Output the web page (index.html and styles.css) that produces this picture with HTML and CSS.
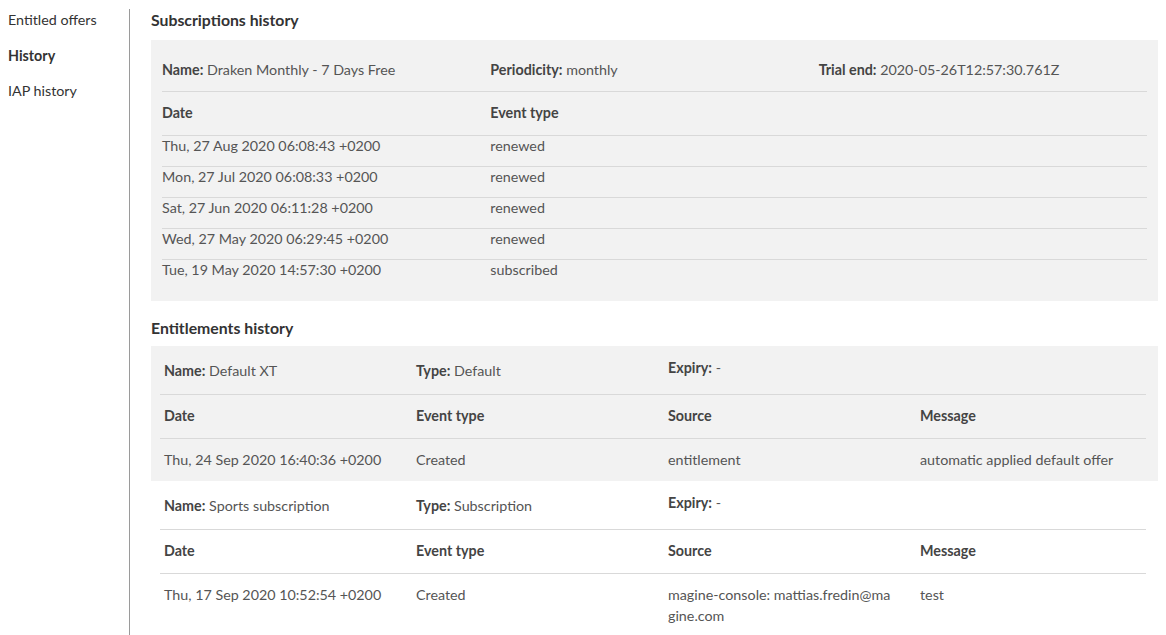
FILE: index.html
```html
<!DOCTYPE html>
<html lang="en">
<head>
    <meta charset="UTF-8">
    <meta name="viewport" content="width=device-width, initial-scale=1.0">
    <title>History</title>
    <link rel="stylesheet" href="styles.css">
</head>
<body>

    <div class="layout">
        <nav class="sidebar">
            <a class="nav-item">Entitled offers</a>
            <a class="nav-item active">History</a>
            <a class="nav-item">IAP history</a>
        </nav>

        <main class="content">
            <h3 class="section-title">Subscriptions history</h3>
            <div class="panel subs">
                <div class="row info">
                    <div><b>Name:</b> Draken Monthly - 7 Days Free</div>
                    <div><b>Periodicity:</b> monthly</div>
                    <div><b>Trial end:</b> 2020-05-26T12:57:30.761Z</div>
                </div>
                <div class="row head">
                    <div>Date</div>
                    <div>Event type</div>
                    <div></div>
                </div>
                <div class="row event">
                    <div>Thu, 27 Aug 2020 06:08:43 +0200</div>
                    <div>renewed</div>
                    <div></div>
                </div>
                <div class="row event">
                    <div>Mon, 27 Jul 2020 06:08:33 +0200</div>
                    <div>renewed</div>
                    <div></div>
                </div>
                <div class="row event">
                    <div>Sat, 27 Jun 2020 06:11:28 +0200</div>
                    <div>renewed</div>
                    <div></div>
                </div>
                <div class="row event">
                    <div>Wed, 27 May 2020 06:29:45 +0200</div>
                    <div>renewed</div>
                    <div></div>
                </div>
                <div class="row event">
                    <div>Tue, 19 May 2020 14:57:30 +0200</div>
                    <div>subscribed</div>
                    <div></div>
                </div>
            </div>

            <h3 class="section-title second">Entitlements history</h3>
            <div class="entitlements">
                <div class="entitlement">
                    <div class="row info">
                        <div><b>Name:</b> Default XT</div>
                        <div><b>Type:</b> Default</div>
                        <div class="expiry"><b>Expiry:</b> -</div>
                        <div></div>
                    </div>
                    <div class="row head">
                        <div>Date</div>
                        <div>Event type</div>
                        <div>Source</div>
                        <div>Message</div>
                    </div>
                    <div class="row event">
                        <div>Thu, 24 Sep 2020 16:40:36 +0200</div>
                        <div>Created</div>
                        <div>entitlement</div>
                        <div>automatic applied default offer</div>
                    </div>
                </div>
                <div class="entitlement">
                    <div class="row info">
                        <div><b>Name:</b> Sports subscription</div>
                        <div><b>Type:</b> Subscription</div>
                        <div class="expiry"><b>Expiry:</b> -</div>
                        <div></div>
                    </div>
                    <div class="row head">
                        <div>Date</div>
                        <div>Event type</div>
                        <div>Source</div>
                        <div>Message</div>
                    </div>
                    <div class="row event">
                        <div>Thu, 17 Sep 2020 10:52:54 +0200</div>
                        <div>Created</div>
                        <div class="source">magine-console: mattias.fredin@magine.com</div>
                        <div>test</div>
                    </div>
                </div>
            </div>
        </main>
    </div>

</body>
</html>
```

FILE: styles.css
```css
body {
    font-family: Lato, "Liberation Sans", sans-serif;
    font-size: 14.3px;
    line-height: 17px;
    color: #555;
    margin: 0;
    background-color: #fff;
}
.layout {
    display: flex;
    align-items: flex-start;
}
.sidebar {
    width: 129px;
    margin-top: 9px;
    min-height: 626px;
    border-right: 1px solid #9a9a9a;
    display: flex;
    flex-direction: column;
}
.nav-item {
    padding-left: 8px;
    height: 35.5px;
    color: #333;
    cursor: pointer;
}
.nav-item:first-child {
    padding-top: 2px;
}
.nav-item.active {
    font-weight: bold;
}
.content {
    flex: 1;
    padding: 0 8px 0 21px;
}
.section-title {
    font-size: 15.8px;
    font-weight: bold;
    color: #333;
    margin: 0;
    height: 40px;
    line-height: 40px;
}
.section-title.second {
    height: 45px;
    line-height: 53px;
}
b {
    color: #444;
}
.panel {
    background-color: #f2f2f2;
}
.subs {
    padding: 8px 11px 10px 11px;
}
.row {
    display: grid;
    border-bottom: 1px solid #d9d9d9;
}
.subs .row {
    grid-template-columns: repeat(3, 1fr);
}
.row.info,
.row.head {
    height: 43px;
    align-items: center;
}
.row.head {
    font-weight: bold;
    color: #444;
}
.subs .row.head {
    padding-bottom: 2px;
    height: 41px;
}
.subs .row.event {
    box-sizing: border-box;
    height: 31px;
    padding-top: 1px;
}
.subs .row.event:last-child {
    border-bottom: none;
}
.entitlement:nth-child(odd) {
    background-color: #f2f2f2;
}
.entitlement {
    padding: 0 12px 0 9px;
}
.entitlement .row {
    grid-template-columns: 252px 252px 252px 1fr;
}
.entitlement .row > div {
    padding: 0 24px 0 4px;
}
.entitlement .row.info {
    height: 47px;
    padding-top: 1px;
}
.entitlement .row.head {
    height: 41px;
    padding-bottom: 2px;
}
.entitlement .row.event {
    border-bottom: none;
    padding: 10px 0 11px 0;
    line-height: 21px;
}
.expiry {
    align-self: start;
    padding-top: 12px !important;
}
.source {
    word-break: break-all;
}
```
